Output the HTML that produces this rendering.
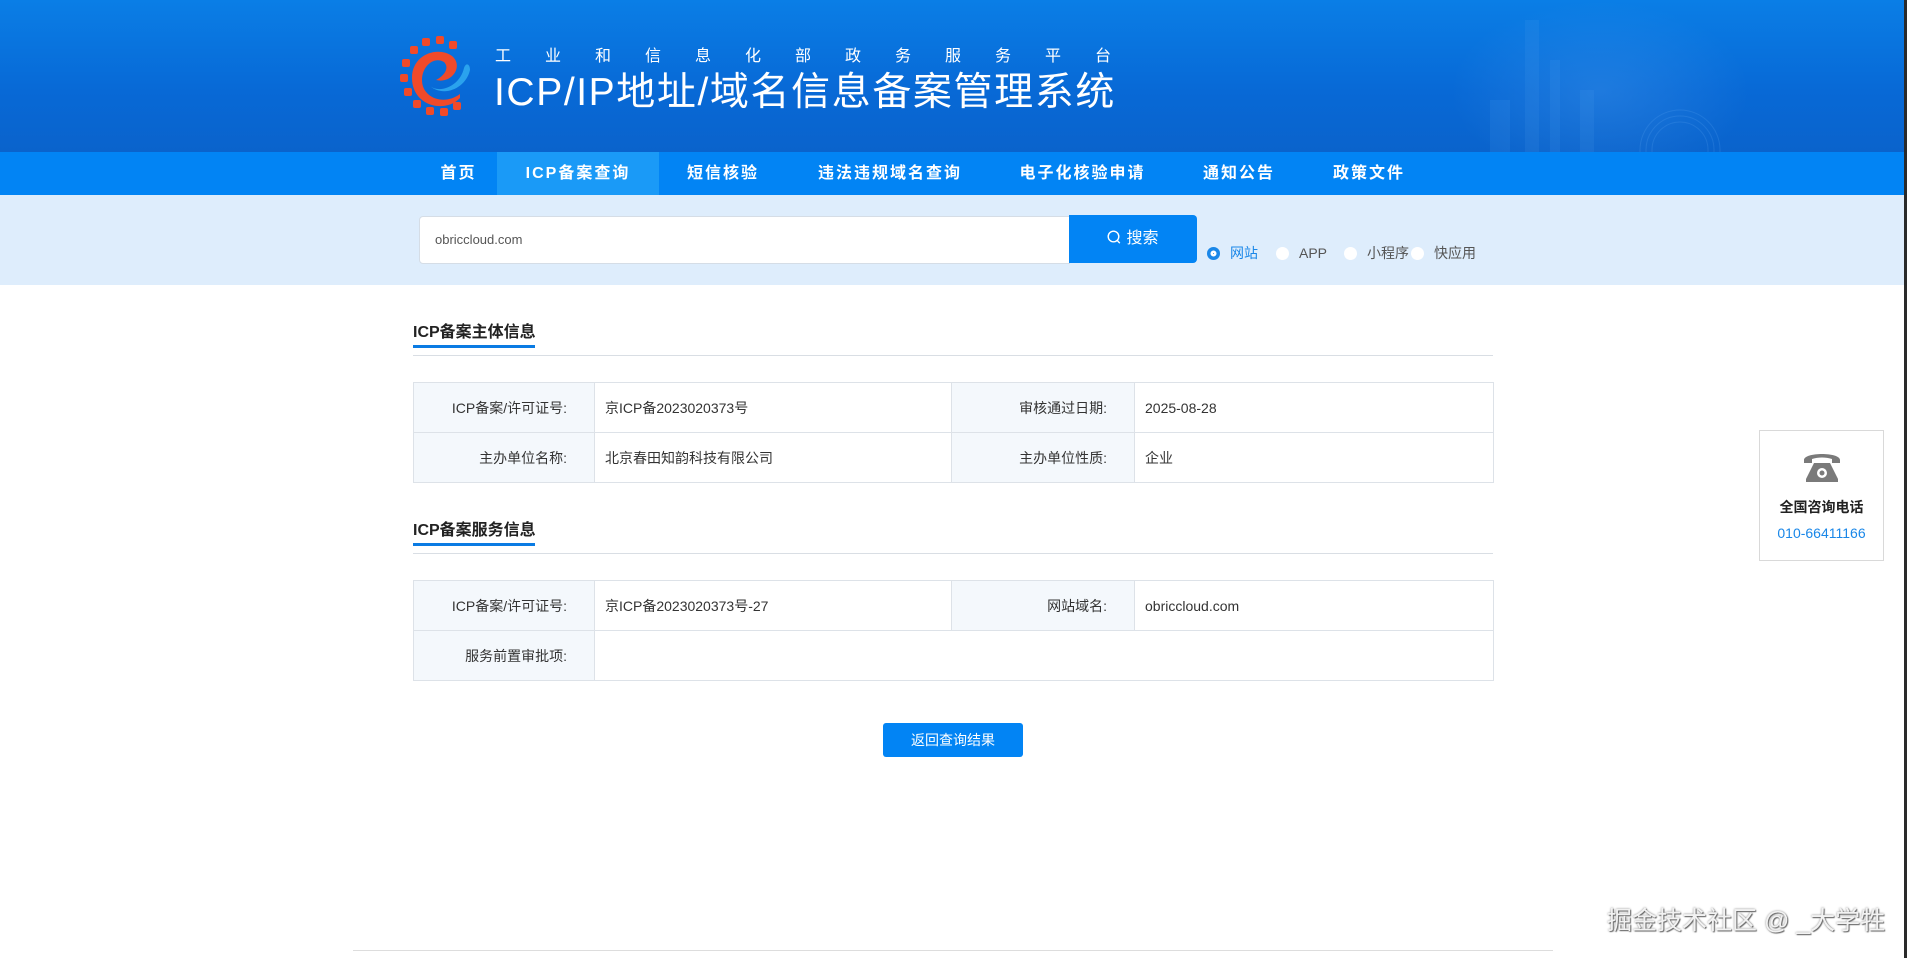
<!DOCTYPE html>
<html><head><meta charset="utf-8">
<style>
*{margin:0;padding:0;box-sizing:border-box}
html,body{width:1907px;height:958px;overflow:hidden;background:#fff;font-family:"Liberation Sans","Noto Sans CJK SC",sans-serif;position:relative}
.abs{position:absolute}
#hdr{left:0;top:0;width:1907px;height:152px;background:linear-gradient(180deg,#0a7ee6 0%,#0869d6 60%,#0a63cc 100%);overflow:hidden}
#hdr .glow{left:1450px;top:0;width:300px;height:152px;background:radial-gradient(ellipse at 50% 60%,rgba(120,190,255,.2),rgba(0,0,0,0) 70%)}
#nav{left:0;top:152px;width:1907px;height:43px;background:#0284f4}
.ni{position:absolute;top:0;height:43px;line-height:43px;color:#fff;font-size:16px;font-weight:bold;letter-spacing:2px;text-align:center;white-space:nowrap}
#band{left:0;top:195px;width:1907px;height:90px;background:#deedfc}
#inp{left:419px;top:216px;width:651px;height:48px;background:#fff;border:1px solid #d5dde6;border-radius:4px 0 0 4px;font-size:13px;color:#555;line-height:46px;padding-left:15px}
#btn{left:1069px;top:215px;width:128px;height:48px;background:#0284f4;border-radius:0 4px 4px 0;color:#fff;font-size:16px;line-height:48px;text-align:center}
.rad{top:245px;font-size:14px;color:#555;line-height:16px;white-space:nowrap}
.rc{display:inline-block;width:13px;height:13px;border-radius:50%;background:#fff;vertical-align:-2px;margin-right:10px}
h3{position:absolute;font-size:16px;font-weight:bold;color:#222;left:413px}
.ul{left:413px;width:122px;height:3px;background:#0a7be3}
.hl{left:413px;width:1080px;height:1px;background:#d9dee4}
table{position:absolute;left:413px;width:1081px;border-collapse:collapse;font-size:14px;color:#333}
td{border:1px solid #dde2e8;height:50px;padding:0 10px}
td.l{background:#f4f8fc;text-align:right;width:181px;padding-right:27px}
td.v{width:357px}
td.l2{width:183px}
#back{left:883px;top:723px;width:140px;height:34px;background:#0284f4;border-radius:3px;color:#fff;font-size:14px;line-height:34px;text-align:center}
#side{left:1759px;top:430px;width:125px;height:131px;border:1px solid #d9d9d9;background:#fff;text-align:center}
#wm{left:1607px;top:901px;font-size:25px;color:#f2f2f2;text-shadow:1px 1px 1px #666,0 0 2px #888;white-space:nowrap}
</style></head><body>
<div id="hdr" class="abs">
 <div class="abs glow"></div>
 <svg class="abs" style="left:1480px;top:0" width="420" height="152">
  <g fill="#5aa7f0" opacity=".12"><rect x="45" y="20" width="14" height="132"/><rect x="70" y="60" width="10" height="92"/><rect x="100" y="90" width="14" height="62"/><rect x="10" y="100" width="20" height="52"/></g>
  <g fill="none" stroke="#7fc0ff" opacity=".15"><circle cx="200" cy="150" r="40"/><circle cx="200" cy="150" r="34"/><circle cx="200" cy="150" r="28"/></g>
 </svg>
 <svg class="abs" style="left:400px;top:36px" width="80" height="80" viewBox="0 0 80 80">
  <g fill="#f04a2a">
   <rect x="22" y="2" width="8" height="8" rx="2"/><rect x="36" y="0" width="8" height="8" rx="2"/><rect x="49" y="5" width="8" height="8" rx="2"/>
   <rect x="10" y="10" width="8" height="8" rx="2"/><rect x="2" y="23" width="8" height="8" rx="2"/><rect x="0" y="38" width="8" height="8" rx="2"/>
   <rect x="4" y="52" width="8" height="8" rx="2"/><rect x="13" y="64" width="8" height="8" rx="2"/><rect x="26" y="71" width="8" height="8" rx="2"/>
   <rect x="40" y="72" width="8" height="8" rx="2"/><rect x="53" y="66" width="8" height="8" rx="2"/>
  </g>
  <path d="M60 62 C45 78 12 70 12 42 C12 18 38 10 52 20 C64 30 52 48 36 44 C44 40 50 32 44 26 C34 20 22 30 22 44 C22 62 44 70 60 58 Z" fill="#f04a2a"/>
  <path d="M30 50 C40 58 60 50 64 32 C66 26 70 28 70 34 C66 52 44 62 30 50 Z" fill="#2fa8f0" opacity=".9"/>
 </svg>
 <div class="abs" style="left:495px;top:47px;color:#fff;font-size:16px;letter-spacing:34px;white-space:nowrap;line-height:20px">工业和信息化部政务服务平台</div>
 <div class="abs" style="left:494px;top:70px;color:#fff;font-size:39px;white-space:nowrap;line-height:46px;letter-spacing:1.6px">ICP/IP地址/域名信息备案管理系统</div>
</div>
<div id="nav" class="abs">
 <div class="ni" style="left:420px;width:77px">首页</div>
 <div class="ni" style="left:497px;width:162px;background:#1a9af7">ICP备案查询</div>
 <div class="ni" style="left:659px;width:128px">短信核验</div>
 <div class="ni" style="left:800px;width:180px">违法违规域名查询</div>
 <div class="ni" style="left:1000px;width:165px">电子化核验申请</div>
 <div class="ni" style="left:1195px;width:88px">通知公告</div>
 <div class="ni" style="left:1325px;width:88px">政策文件</div>
</div>
<div id="band" class="abs"></div>
<div id="inp" class="abs">obriccloud.com</div>
<div id="btn" class="abs"><svg width="14" height="15" viewBox="0 0 14 15" style="vertical-align:-2px;margin-right:5px"><circle cx="6.5" cy="6.5" r="5.3" fill="none" stroke="#fff" stroke-width="1.4"/><path d="M10.3 10.5 L12.8 13.2" stroke="#fff" stroke-width="1.4"/></svg>搜索</div>
<div class="abs rad" style="left:1207px;color:#1a87e8"><span class="rc" style="background:#1a87e8;box-shadow:inset 0 0 0 3.5px #1a87e8,inset 0 0 0 6px #fff"></span>网站</div>
<div class="abs rad" style="left:1276px"><span class="rc"></span>APP</div>
<div class="abs rad" style="left:1344px"><span class="rc"></span>小程序</div>
<div class="abs rad" style="left:1411px"><span class="rc"></span>快应用</div>

<h3 style="top:318px">ICP备案主体信息</h3>
<div class="abs ul" style="top:345px"></div>
<div class="abs hl" style="top:355px"></div>
<table style="top:382px">
<tr><td class="l">ICP备案/许可证号:</td><td class="v">京ICP备2023020373号</td><td class="l l2">审核通过日期:</td><td>2025-08-28</td></tr>
<tr><td class="l">主办单位名称:</td><td class="v">北京春田知韵科技有限公司</td><td class="l l2">主办单位性质:</td><td>企业</td></tr>
</table>

<h3 style="top:516px">ICP备案服务信息</h3>
<div class="abs ul" style="top:543px"></div>
<div class="abs hl" style="top:553px"></div>
<table style="top:580px">
<tr><td class="l">ICP备案/许可证号:</td><td class="v">京ICP备2023020373号-27</td><td class="l l2">网站域名:</td><td>obriccloud.com</td></tr>
<tr><td class="l">服务前置审批项:</td><td colspan="3"></td></tr>
</table>

<div id="back" class="abs">返回查询结果</div>

<div id="side" class="abs">
 <svg width="40" height="32" viewBox="0 0 40 32" style="margin-top:20px"><path d="M2 9 C2 1 38 1 38 9 L38 12 L30 12 L30 8 C24 6 16 6 10 8 L10 12 L2 12 Z" fill="#7a7a7a"/><path d="M12 12 L28 12 L36 28 L36 31 L4 31 L4 28 Z" fill="#7a7a7a"/><circle cx="20" cy="22" r="5" fill="#fff"/><circle cx="20" cy="22" r="2.5" fill="#7a7a7a"/></svg>
 <div style="font-size:14px;font-weight:bold;color:#222;margin-top:9px">全国咨询电话</div>
 <div style="font-size:14px;color:#1a87e8;margin-top:8px">010-66411166</div>
</div>

<div class="abs" style="left:353px;top:950px;width:1200px;height:1px;background:#ddd"></div>
<div id="wm" class="abs">掘金技术社区 @ _大学牲</div>
<div class="abs" style="left:1904px;top:0;width:3px;height:958px;background:#2a2a2a"></div>
</body></html>
